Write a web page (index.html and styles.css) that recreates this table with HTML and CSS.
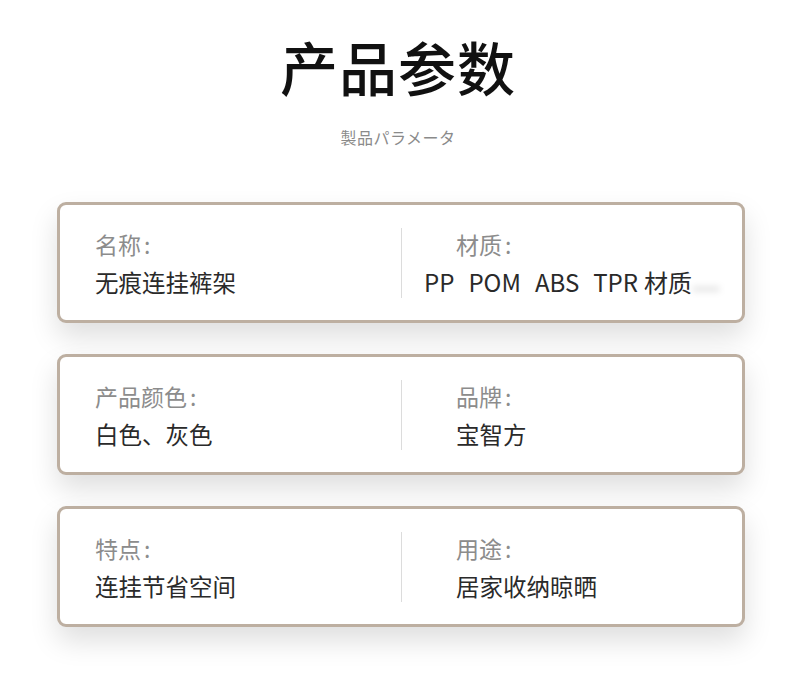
FILE: index.html
```html
<!DOCTYPE html>
<html lang="zh">
<head>
<meta charset="utf-8">
<link rel="stylesheet" href="styles.css">
</head>
<body>
<div class="page">
  <h1 class="title">产品参数</h1>
  <div class="subtitle">製品パラメータ</div>
  <div class="cards">
    <div class="card">
      <div class="cell">
        <div class="label">名称<span class="colon">:</span></div>
        <div class="value">无痕连挂裤架</div>
      </div>
      <div class="divider"></div>
      <div class="cell right">
        <div class="label">材质<span class="colon">:</span></div>
        <div class="value wide"><span>PP</span><span>POM</span><span>ABS</span><span>TPR</span>材质<i class="smear"></i></div>
      </div>
    </div>
    <div class="card">
      <div class="cell">
        <div class="label">产品颜色<span class="colon">:</span></div>
        <div class="value">白色、灰色</div>
      </div>
      <div class="divider"></div>
      <div class="cell right">
        <div class="label">品牌<span class="colon">:</span></div>
        <div class="value">宝智方</div>
      </div>
    </div>
    <div class="card">
      <div class="cell">
        <div class="label">特点<span class="colon">:</span></div>
        <div class="value">连挂节省空间</div>
      </div>
      <div class="divider"></div>
      <div class="cell right">
        <div class="label">用途<span class="colon">:</span></div>
        <div class="value">居家收纳晾晒</div>
      </div>
    </div>
  </div>
</div>
</body>
</html>
```
FILE: styles.css
```css
* { box-sizing: border-box; }
html, body { margin: 0; padding: 0; background: #fff; }
body {
  width: 790px;
  height: 682px;
  overflow: hidden;
  font-family: "Noto Sans CJK SC", "Noto Sans", sans-serif;
}
.page {
  display: flex;
  flex-direction: column;
  align-items: center;
  padding-top: 28px;
}
.title {
  margin: 0 0 0 6px;
  font-size: 58px;
  line-height: 76px;
  font-weight: 500;
  color: #111;
  letter-spacing: 1px;
}
.subtitle {
  margin: 22px 0 0 6px;
  font-size: 16px;
  line-height: 22px;
  color: #8a8a8a;
  letter-spacing: 0.5px;
}
.cards {
  margin: 54px 0 0 12px;
  display: flex;
  flex-direction: column;
  gap: 31px;
}
.card {
  width: 688px;
  height: 121px;
  border: 3px solid #bdafa1;
  border-radius: 9px;
  background: #fff;
  display: flex;
  align-items: center;
  box-shadow: 0 14px 28px rgba(0, 0, 0, 0.13);
}
.cell {
  flex: 0 0 341px;
  padding-left: 35px;
  display: flex;
  flex-direction: column;
  gap: 7px;
}
.cell.right {
  flex: 1;
  padding-left: 54px;
}
.divider {
  width: 1px;
  height: 70px;
  background: #dcdcdc;
}
.label {
  font-size: 23px;
  line-height: 30px;
  color: #8c8c8c;
  margin-top: 2px;
}
.colon {
  margin-left: 3px;
}
.value {
  font-size: 23.5px;
  line-height: 32px;
  color: #2a2a2a;
}
.value.wide {
  position: relative;
  margin-left: -32px;
  white-space: nowrap;
  font-size: 24px;
}
.value.wide span {
  margin-right: 14px;
}
.value.wide span:nth-child(4) {
  margin-right: 6px;
}
.smear {
  position: absolute;
  left: 268px;
  top: 20px;
  width: 28px;
  height: 6px;
  border-radius: 3px;
  background: rgba(0, 0, 0, 0.09);
  filter: blur(3px);
}
```
